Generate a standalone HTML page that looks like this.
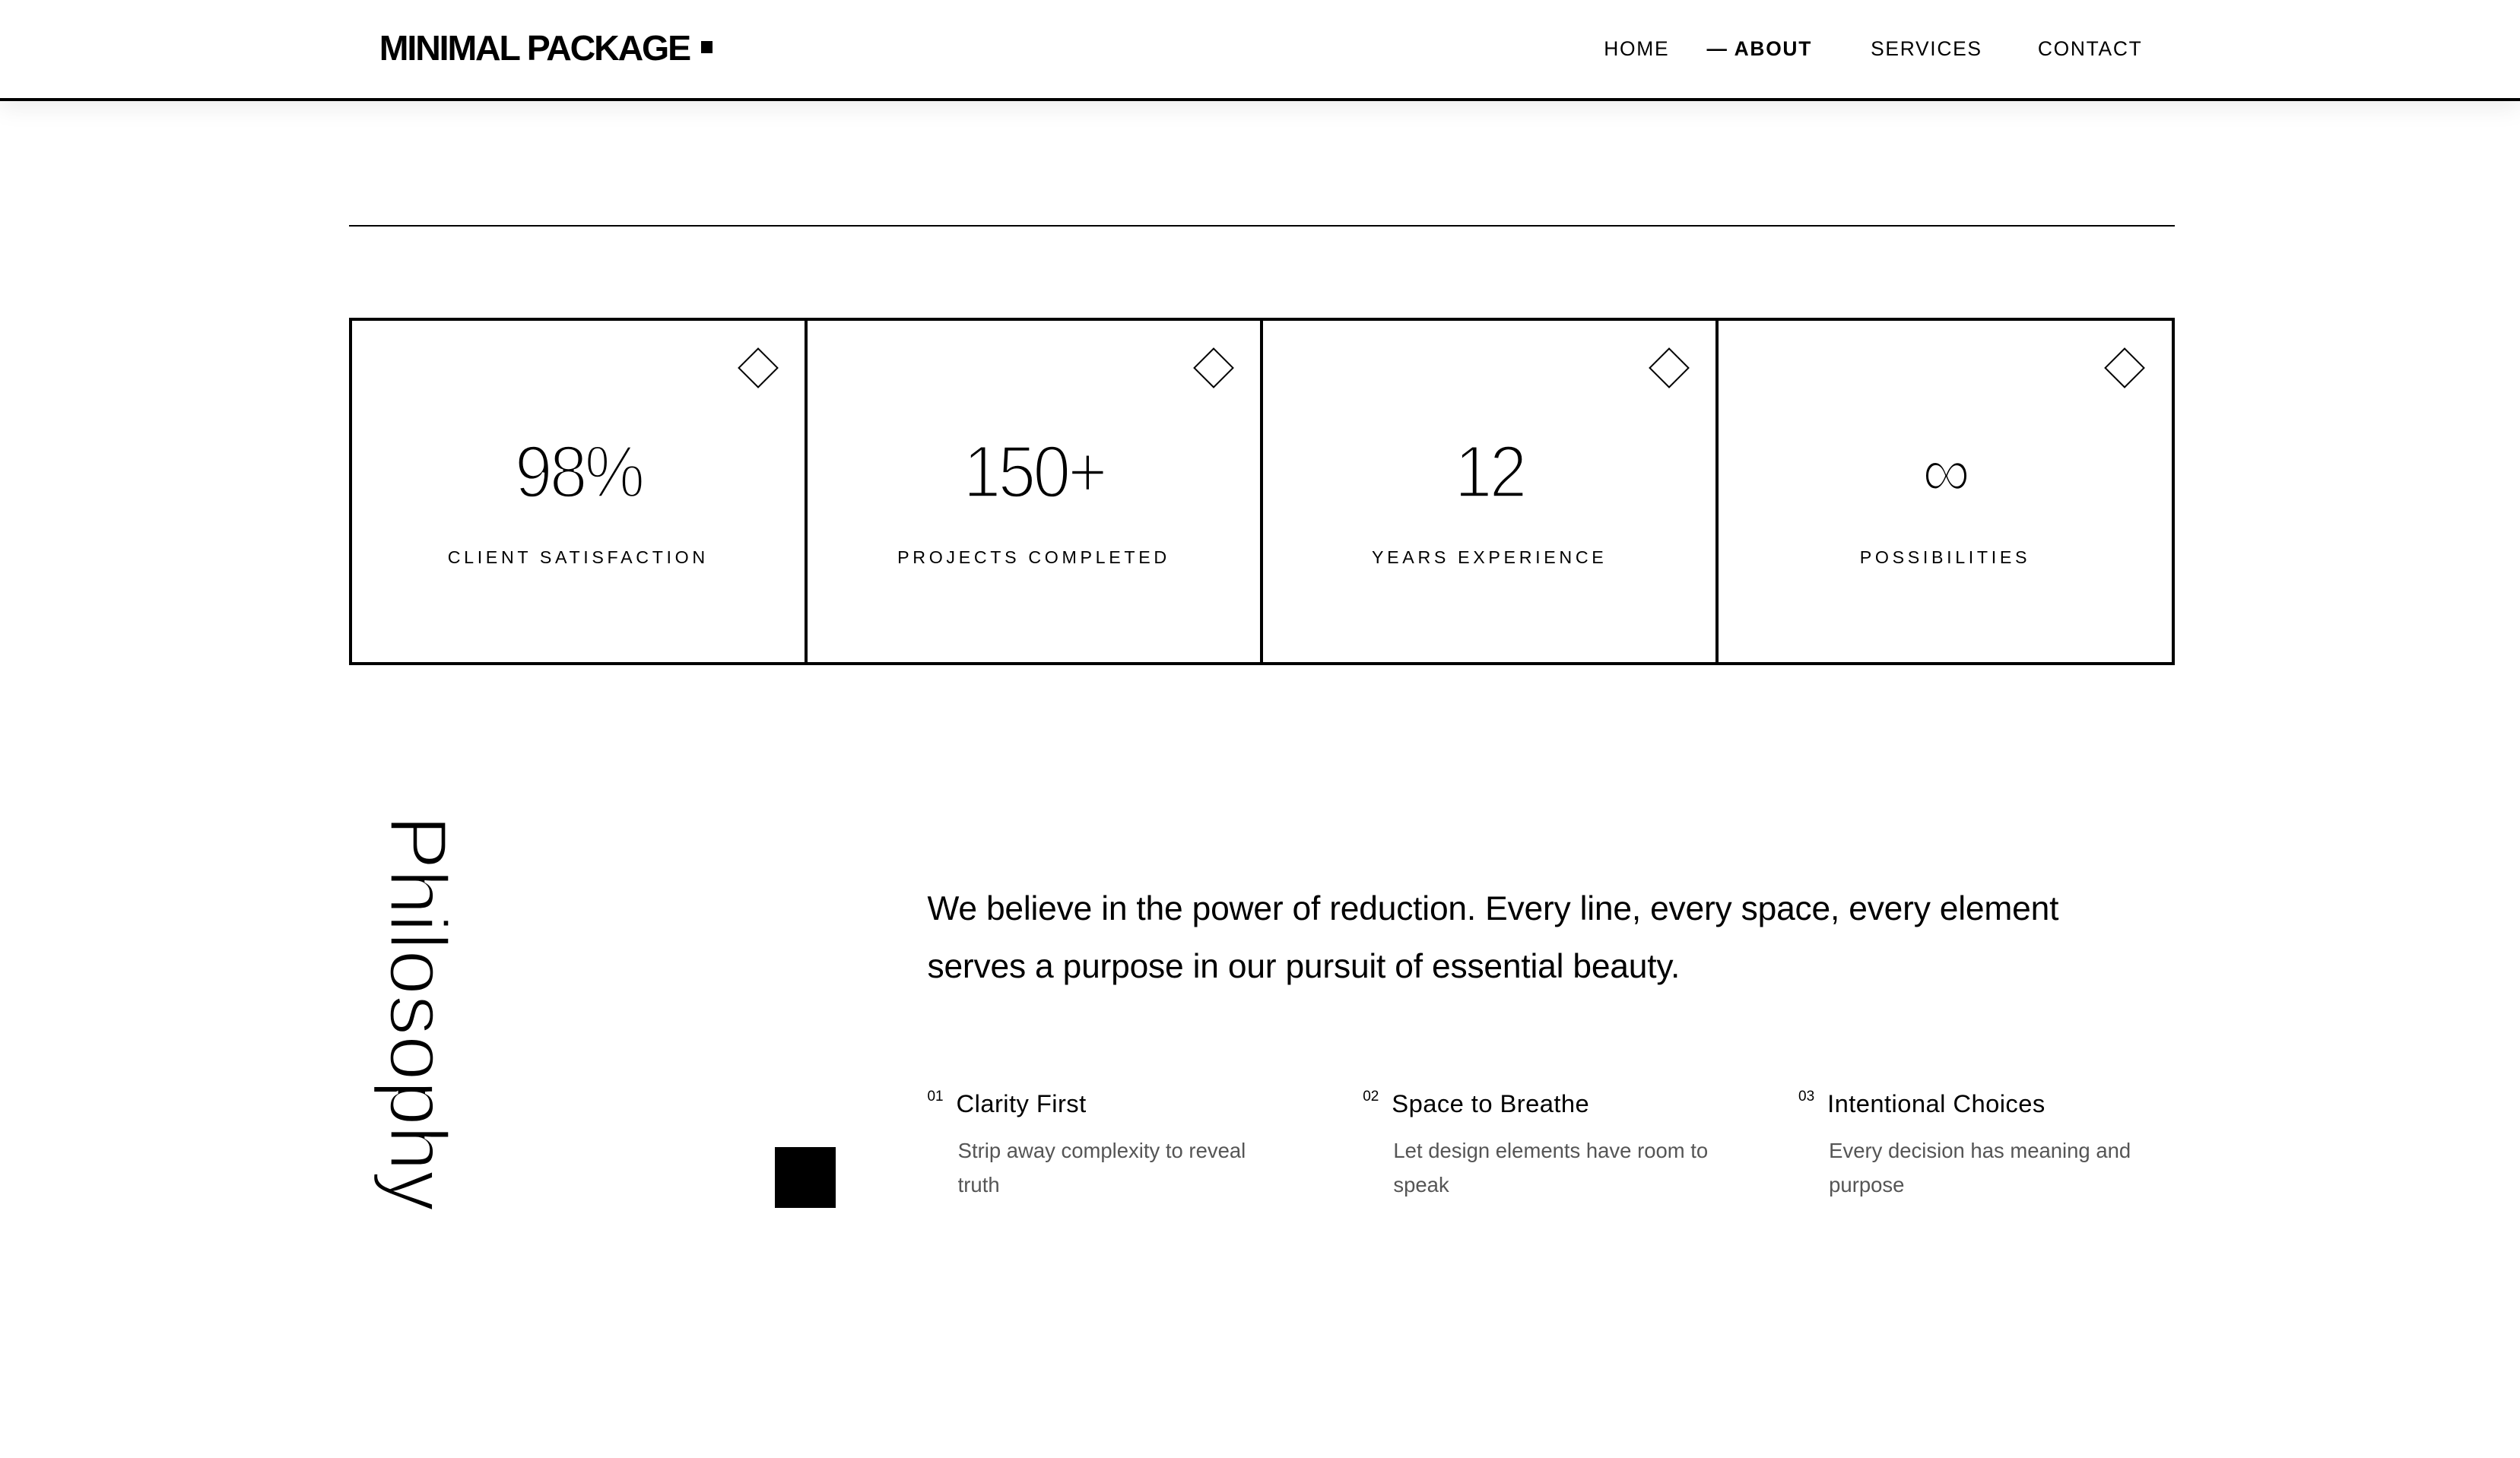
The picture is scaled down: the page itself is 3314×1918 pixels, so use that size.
<!DOCTYPE html>
<html><head><meta charset="utf-8"><style>
html{zoom:2.1135}
*{margin:0;padding:0;box-sizing:border-box}
body{width:1568px;height:907.5px;background:#fff;font-family:"Liberation Sans",sans-serif;color:#000;position:relative;overflow:hidden}
.hdr{position:absolute;left:0;top:0;width:1568px;height:63px;border-bottom:2px solid #000;background:#fff;box-shadow:0 4px 14px rgba(0,0,0,0.08)}
.logo{position:absolute;left:236px;top:17px;font-size:22px;font-weight:700;letter-spacing:-1px;white-space:nowrap}
.logo i{display:inline-block;width:7px;height:8px;background:#000;margin-left:7px;vertical-align:4px}
.nav{position:absolute;top:23px;font-size:12.5px;letter-spacing:0.8px}
.rule{position:absolute;left:217px;top:140px;width:1136px;height:1px;background:#000}
.grid{position:absolute;left:217px;top:198px;width:1136px;height:216px;border:2px solid #000;display:flex}
.cell{flex:1;border-right:2px solid #000;position:relative;text-align:center}
.cell:last-child{border-right:none}
.dia{position:absolute;right:20px;top:20px;width:18px;height:18px;transform:rotate(45deg);border:1.3px solid #000}
.num{position:absolute;left:0;right:0;top:66px;font-size:46px;line-height:56px;letter-spacing:-2px;transform:scaleX(0.92);-webkit-text-stroke:1.6px #fff}
.lab{position:absolute;left:0;right:0;top:141px;font-size:11px;letter-spacing:2.2px}
.phil{position:absolute;left:230px;top:507px;writing-mode:vertical-rl;font-size:51px;line-height:60px;letter-spacing:-0.3px;-webkit-text-stroke:1.6px #fff}
.sq{position:absolute;left:482px;top:714px;width:38px;height:38px;background:#000}
.lead{position:absolute;left:577px;top:548px;width:730px;font-size:21px;line-height:36px;letter-spacing:-0.1px}
.item{position:absolute;top:672px;width:220px}
.item h4{font-size:15.5px;font-weight:400;letter-spacing:0.2px;line-height:22px}
.item h4 sup{font-size:9px;margin-right:8px;vertical-align:7px;letter-spacing:0}
.item p{margin:8px 0 0 19px;font-size:13px;line-height:21px;color:#555}
</style></head><body>
<div class="hdr">
<div class="logo">MINIMAL PACKAGE<i></i></div>
<div class="nav" style="left:998px">HOME</div>
<div class="nav" style="left:1062px;font-weight:700">— ABOUT</div>
<div class="nav" style="left:1164px">SERVICES</div>
<div class="nav" style="left:1268px">CONTACT</div>
</div>
<div class="rule"></div>
<div class="grid">
<div class="cell"><div class="dia"></div><div class="num">98%</div><div class="lab">CLIENT SATISFACTION</div></div>
<div class="cell"><div class="dia"></div><div class="num">150+</div><div class="lab">PROJECTS COMPLETED</div></div>
<div class="cell"><div class="dia"></div><div class="num">12</div><div class="lab">YEARS EXPERIENCE</div></div>
<div class="cell"><div class="dia"></div><div class="num">∞</div><div class="lab">POSSIBILITIES</div></div>
</div>
<div class="phil">Philosophy</div>
<div class="sq"></div>
<div class="lead">We believe in the power of reduction. Every line, every space, every element serves a purpose in our pursuit of essential beauty.</div>
<div class="item" style="left:577px"><h4><sup>01</sup>Clarity First</h4><p>Strip away complexity to reveal truth</p></div>
<div class="item" style="left:848px"><h4><sup>02</sup>Space to Breathe</h4><p>Let design elements have room to speak</p></div>
<div class="item" style="left:1119px"><h4><sup>03</sup>Intentional Choices</h4><p>Every decision has meaning and purpose</p></div>
</body></html>
